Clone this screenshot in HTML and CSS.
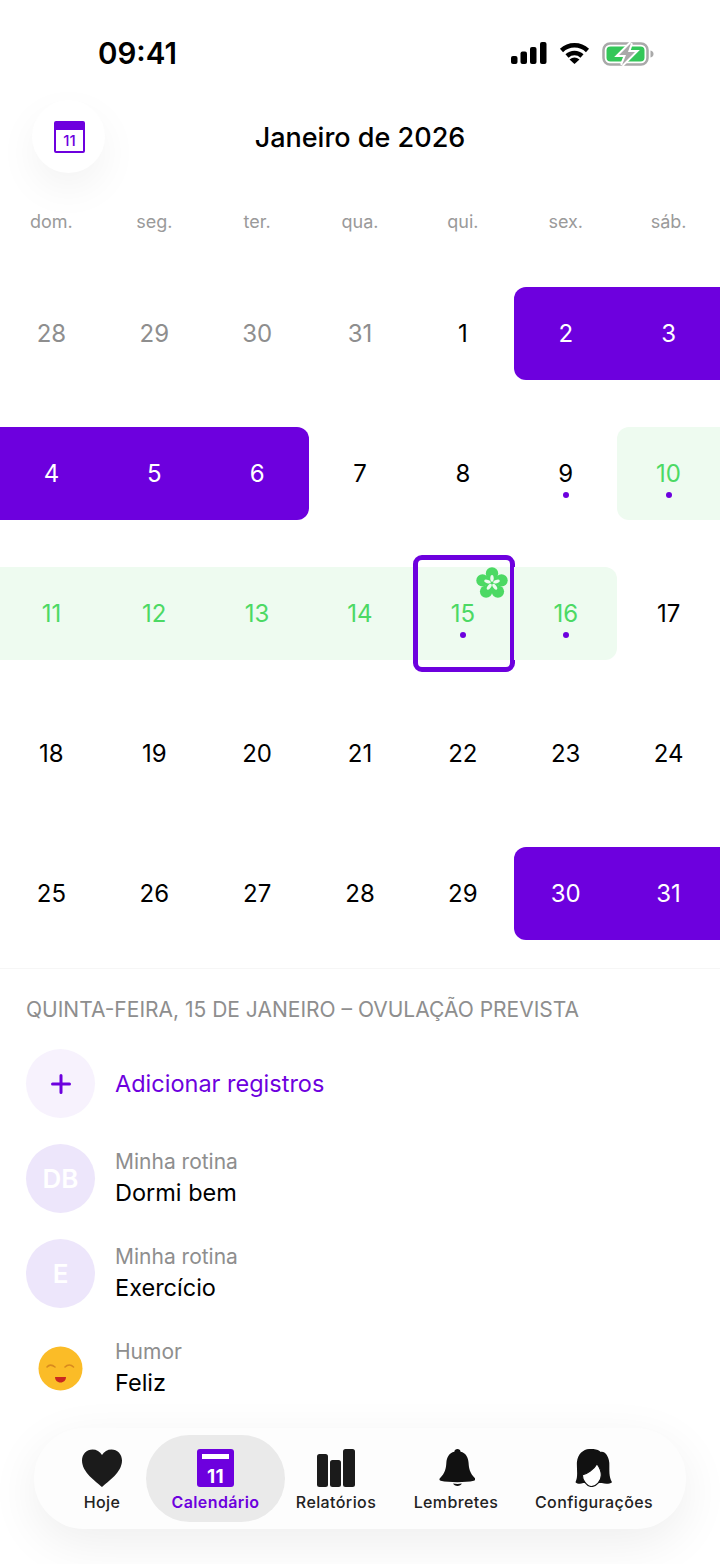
FILE: index.html
```html
<!DOCTYPE html>
<html>
<head>
    <title>Calendário</title>
    <link rel="stylesheet" href="styles.css">
</head>
<body>

<div class="status-bar">
    <span class="clock">09:41</span>
    <div class="status-icons">
        <svg width="36" height="22" viewBox="0 0 36 22"><rect x="0" y="14" width="6.500" height="8" rx="2"/><rect x="9.500" y="9.500" width="6.500" height="12.500" rx="2"/><rect x="19" y="5" width="6.500" height="17" rx="2"/><rect x="29" y="0" width="6.500" height="22" rx="2"/></svg>
        <svg width="31" height="22" viewBox="0 0 31 22"><path d="M2.500 8.500A19 19 0 0 1 28.500 8.500M8 14A11 11 0 0 1 23 14" fill="none" stroke="#000" stroke-width="4.500"/><path d="M15.500 22L10.500 17.500Q15.500 13.500 20.500 17.500Z"/></svg>
        <svg width="52" height="24" viewBox="0 0 52 24">
            <rect x="1.500" y="1.500" width="44" height="21" rx="6.500" fill="#fff" stroke="#a9a9a9" stroke-width="2.500"/>
            <rect x="4.500" y="4.500" width="38" height="15" rx="4" fill="#34c759"/>
            <path d="M48.500 8.500c2 .5 3 1.800 3 3.500s-1 3-3 3.500z" fill="#a9a9a9"/>
            <path d="M29 1L17 13h7l-4 10L33 10h-7z" fill="#a9a9a9" stroke="#fff" stroke-width="4" paint-order="stroke"/>
        </svg>
    </div>
</div>

<div class="header">
    <div class="today-button">
        <div class="mini-calendar">11</div>
    </div>
    <h1>Janeiro de 2026</h1>
</div>

<div class="weekdays">
    <span>dom.</span><span>seg.</span><span>ter.</span><span>qua.</span><span>qui.</span><span>sex.</span><span>sáb.</span>
</div>

<div class="calendar">
    <div class="day muted">28</div>
    <div class="day muted">29</div>
    <div class="day muted">30</div>
    <div class="day muted">31</div>
    <div class="day">1</div>
    <div class="day period start">2</div>
    <div class="day period">3</div>

    <div class="day period">4</div>
    <div class="day period">5</div>
    <div class="day period end">6</div>
    <div class="day">7</div>
    <div class="day">8</div>
    <div class="day has-log">9</div>
    <div class="day fertile start has-log">10</div>

    <div class="day fertile">11</div>
    <div class="day fertile">12</div>
    <div class="day fertile">13</div>
    <div class="day fertile">14</div>
    <div class="day fertile selected has-log">15
        <svg class="flower" width="32" height="32" viewBox="0 0 32 32">
            <circle cx="16" cy="16" r="7"/>
            <circle cx="16" cy="6.500" r="6.200"/><circle cx="25.500" cy="13.400" r="6.200"/><circle cx="21.900" cy="24.600" r="6.200"/><circle cx="10.100" cy="24.600" r="6.200"/><circle cx="6.500" cy="13.400" r="6.200"/>
            <g class="flower-mark">
                <ellipse cx="16" cy="11.300" rx="1.700" ry="3.400"/>
                <ellipse cx="16" cy="11.300" rx="1.700" ry="3.400" transform="rotate(72 16 16)"/>
                <ellipse cx="16" cy="11.300" rx="1.700" ry="3.400" transform="rotate(144 16 16)"/>
                <ellipse cx="16" cy="11.300" rx="1.700" ry="3.400" transform="rotate(216 16 16)"/>
                <ellipse cx="16" cy="11.300" rx="1.700" ry="3.400" transform="rotate(288 16 16)"/>
            </g>
        </svg>
    </div>
    <div class="day fertile end has-log">16</div>
    <div class="day">17</div>

    <div class="day">18</div>
    <div class="day">19</div>
    <div class="day">20</div>
    <div class="day">21</div>
    <div class="day">22</div>
    <div class="day">23</div>
    <div class="day">24</div>

    <div class="day">25</div>
    <div class="day">26</div>
    <div class="day">27</div>
    <div class="day">28</div>
    <div class="day">29</div>
    <div class="day period start">30</div>
    <div class="day period">31</div>
</div>

<div class="details">
    <p class="details-title">Quinta-feira, 15 de janeiro – Ovulação prevista</p>

    <div class="log-row">
        <div class="avatar add">
            <svg width="20" height="20" viewBox="0 0 20 20"><path d="M10 1.500v17M1.500 10h17" stroke="#6d00de" stroke-width="3" stroke-linecap="round"/></svg>
        </div>
        <span class="add-label">Adicionar registros</span>
    </div>
    <div class="log-row">
        <div class="avatar">DB</div>
        <div class="log-text"><span class="log-type">Minha rotina</span><span class="log-name">Dormi bem</span></div>
    </div>
    <div class="log-row">
        <div class="avatar">E</div>
        <div class="log-text"><span class="log-type">Minha rotina</span><span class="log-name">Exercício</span></div>
    </div>
    <div class="log-row">
        <div class="avatar plain">
            <svg width="45" height="45" viewBox="0 0 45 45">
                <circle cx="22.500" cy="22.500" r="22" fill="#fbbc27"/>
                <path d="M9 21c2-2.500 5-2.500 8 0M27 21c2.500-2.500 6-2.500 8.500 0" fill="none" stroke="#d98a1e" stroke-width="1.600" stroke-linecap="round"/>
                <path d="M17 31h11c0 3-2.200 5.500-5.500 5.500S17 34 17 31z" fill="#c9281f"/>
            </svg>
        </div>
        <div class="log-text"><span class="log-type">Humor</span><span class="log-name">Feliz</span></div>
    </div>
</div>

<div class="tab-bar">
    <div class="tab">
        <svg width="42" height="38" viewBox="0 0 42 38"><path d="M21 38C15 32.500 1 23.500 1 11.500 1 5 5.800.5 11.500.5c4 0 7.500 2 9.500 5.500 2-3.500 5.500-5.500 9.500-5.500C36.200.5 41 5 41 11.500 41 23.500 27 32.500 21 38z" fill="#1b1b1b"/></svg>
        <span>Hoje</span>
    </div>
    <div class="tab active">
        <div class="tab-calendar">11</div>
        <span>Calendário</span>
    </div>
    <div class="tab">
        <svg width="38" height="38" viewBox="0 0 38 38" fill="#1b1b1b"><rect x="0" y="5" width="11" height="33" rx="2.500"/><rect x="13" y="11" width="11" height="27" rx="2.500"/><rect x="26" y="0" width="12" height="38" rx="2.500"/></svg>
        <span>Relatórios</span>
    </div>
    <div class="tab">
        <svg width="38" height="39" viewBox="-1.500 0 38 39" fill="#111"><path d="M19 0c1.800 0 3 1.200 3.200 2.700 5.500 1.200 7.800 5.800 8.200 11.300.4 6 1.200 10.500 6.600 16 .8 1 .2 2.300-1.200 2.600-4.500 1-10.500 1.400-17 1.400s-12.500-.4-17-1.400C.6 32.300 0 31 1 30c5.400-5.500 6.200-10 6.600-16 .4-5.500 2.700-10.100 8.200-11.300C16 1.200 17.200 0 19 0z"/><path d="M14.500 35.500c2.800.4 6.200.4 9 0-.7 1.600-2.500 2.500-4.500 2.500s-3.800-.9-4.500-2.500z"/></svg>
        <span>Lembretes</span>
    </div>
    <div class="tab">
        <svg width="38" height="39" viewBox="0 0 38 39"><path d="M14 0C20-.5 24 1 26 3c4-1 8 4 8.700 11 .3 8-.7 14 2.800 20-2.500 2-6.500 2-10.500 1H8c-3 1-6 1-8-1 3-6 1-14 1.500-21C2.500 5 8 .5 14 0z" fill="#111"/><path d="M22 15c3 4 4.500 8 4.500 12 0 6-5.500 11.500-10 11.500-5 0-9.500-6.500-9.500-12 4 -.5 12-5.500 15-11.500z" fill="#fff" stroke="#111" stroke-width="1.200"/></svg>
        <span>Configurações</span>
    </div>
</div>

</body>
</html>
```
FILE: styles.css
```css
body {
    font-family: 'Inter', 'Liberation Sans', sans-serif;
    background-color: #fff;
    color: #000;
    width: 720px;
    height: 1564px;
    margin: 0;
    overflow: hidden;
}

.status-bar {
    height: 100px;
    display: flex;
    justify-content: space-between;
    align-items: flex-start;
    padding: 0 66px 0 98px;
    box-sizing: border-box;
}

.clock {
    font-size: 29.500px;
    font-weight: 600;
    line-height: 36px;
    margin-top: 35px;
}

.status-icons {
    display: flex;
    align-items: flex-start;
    gap: 12px;
    margin-top: 42px;
}

.header {
    height: 73px;
    position: relative;
    padding-left: 32px;
}

.header h1 {
    position: absolute;
    left: 0;
    right: 0;
    top: 0;
    margin: 0;
    text-align: center;
    font-size: 27px;
    font-weight: 500;
    line-height: 76px;
}

.today-button {
    width: 73px;
    height: 73px;
    border-radius: 50%;
    background-color: #fff;
    box-shadow: 0 16px 40px rgba(0, 0, 0, 0.05);
    display: flex;
    justify-content: center;
    align-items: center;
}

.mini-calendar {
    width: 31px;
    height: 32px;
    box-sizing: border-box;
    margin: 0 0 0 2px;
    border: 2px solid #6d00de;
    border-top-width: 9px;
    border-radius: 2px;
    color: #6d00de;
    font-size: 15px;
    font-weight: 500;
    line-height: 21px;
    text-align: center;
}

.weekdays {
    display: grid;
    grid-template-columns: repeat(7, 1fr);
    margin-top: 38px;
    text-align: center;
    font-size: 18px;
    line-height: 22px;
    color: #9a9a9a;
}

.calendar {
    display: grid;
    grid-template-columns: repeat(7, 1fr);
    grid-auto-rows: 93px;
    row-gap: 47px;
    margin-top: 54px;
}

.day {
    position: relative;
    display: flex;
    justify-content: center;
    align-items: center;
    font-size: 24px;
}

.muted {
    color: #8e8e8e;
}

.period {
    background-color: #6d00de;
    color: #fff;
}

.fertile {
    background-color: #eefbf0;
    color: #4cd964;
}

.start {
    border-top-left-radius: 12px;
    border-bottom-left-radius: 12px;
}

.end {
    border-top-right-radius: 12px;
    border-bottom-right-radius: 12px;
}

.has-log::after {
    content: "";
    position: absolute;
    left: 50%;
    bottom: 22px;
    width: 6.500px;
    height: 6.500px;
    margin-left: -3px;
    border-radius: 50%;
    background-color: #6d00de;
}

.selected::before {
    content: "";
    position: absolute;
    top: -12px;
    bottom: -12px;
    left: 1.500px;
    right: -0.500px;
    border: 5px solid #6d00de;
    border-radius: 9px;
}

.flower {
    position: absolute;
    top: 0;
    right: 6px;
    fill: #4cd964;
}

.flower-mark {
    fill: #eefbf0;
}

.details {
    margin-top: 28px;
    border-top: 1px solid #f6f6f6;
    padding: 29px 26px 0;
}

.details-title {
    margin: 0 0 27px;
    font-size: 21px;
    line-height: 24px;
    color: #8e8e8e;
    text-transform: uppercase;
}

.log-row {
    display: flex;
    align-items: center;
    gap: 20px;
    margin-bottom: 26px;
}

.log-row:last-child {
    margin-bottom: 0;
}

.avatar {
    width: 69px;
    height: 69px;
    flex-shrink: 0;
    border-radius: 50%;
    background-color: #ede6fb;
    color: #fff;
    font-size: 26px;
    font-weight: 600;
    display: flex;
    justify-content: center;
    align-items: center;
}

.avatar.add {
    background-color: #f7f2fd;
}

.avatar.plain {
    background-color: transparent;
}

.add-label {
    font-size: 23.500px;
    color: #6d00de;
}

.log-text {
    display: flex;
    flex-direction: column;
    padding-bottom: 3px;
}

.log-type {
    font-size: 21px;
    line-height: 31px;
    color: #8e8e8e;
}

.log-name {
    font-size: 23.500px;
    line-height: 31px;
}

.tab-bar {
    width: 652px;
    height: 101px;
    box-sizing: border-box;
    margin: 25px 0 0 34px;
    padding: 7px 0 7px 24px;
    border-radius: 50px;
    background-color: #fdfdfd;
    box-shadow: 0 14px 50px rgba(0, 0, 0, 0.07);
    display: grid;
    grid-template-columns: 88px 139px 102px 138px 138px;
}

.tab {
    display: flex;
    flex-direction: column;
    align-items: center;
    padding-top: 14px;
    font-size: 16px;
    font-weight: 500;
    color: #222;
    letter-spacing: 0.4px;
}

.tab span {
    position: relative;
    margin-top: 5px;
    line-height: 20px;
}

.tab svg, .tab-calendar {
    flex-shrink: 0;
    height: 38px;
}

.tab.active {
    background-color: #eaeaea;
    border-radius: 44px;
    color: #6d00de;
    font-weight: 600;
}

.tab-calendar {
    width: 37px;
    box-sizing: border-box;
    padding-top: 14px;
    background-color: #6d00de;
    border-radius: 3px;
    border-top: 5px solid #6d00de;
    position: relative;
    color: #fff;
    font-size: 19px;
    font-weight: 700;
    line-height: 18px;
    text-align: center;
}

.tab-calendar::before {
    content: "";
    position: absolute;
    top: 0;
    left: 5px;
    right: 5px;
    height: 5px;
    background-color: #fff;
}
```
